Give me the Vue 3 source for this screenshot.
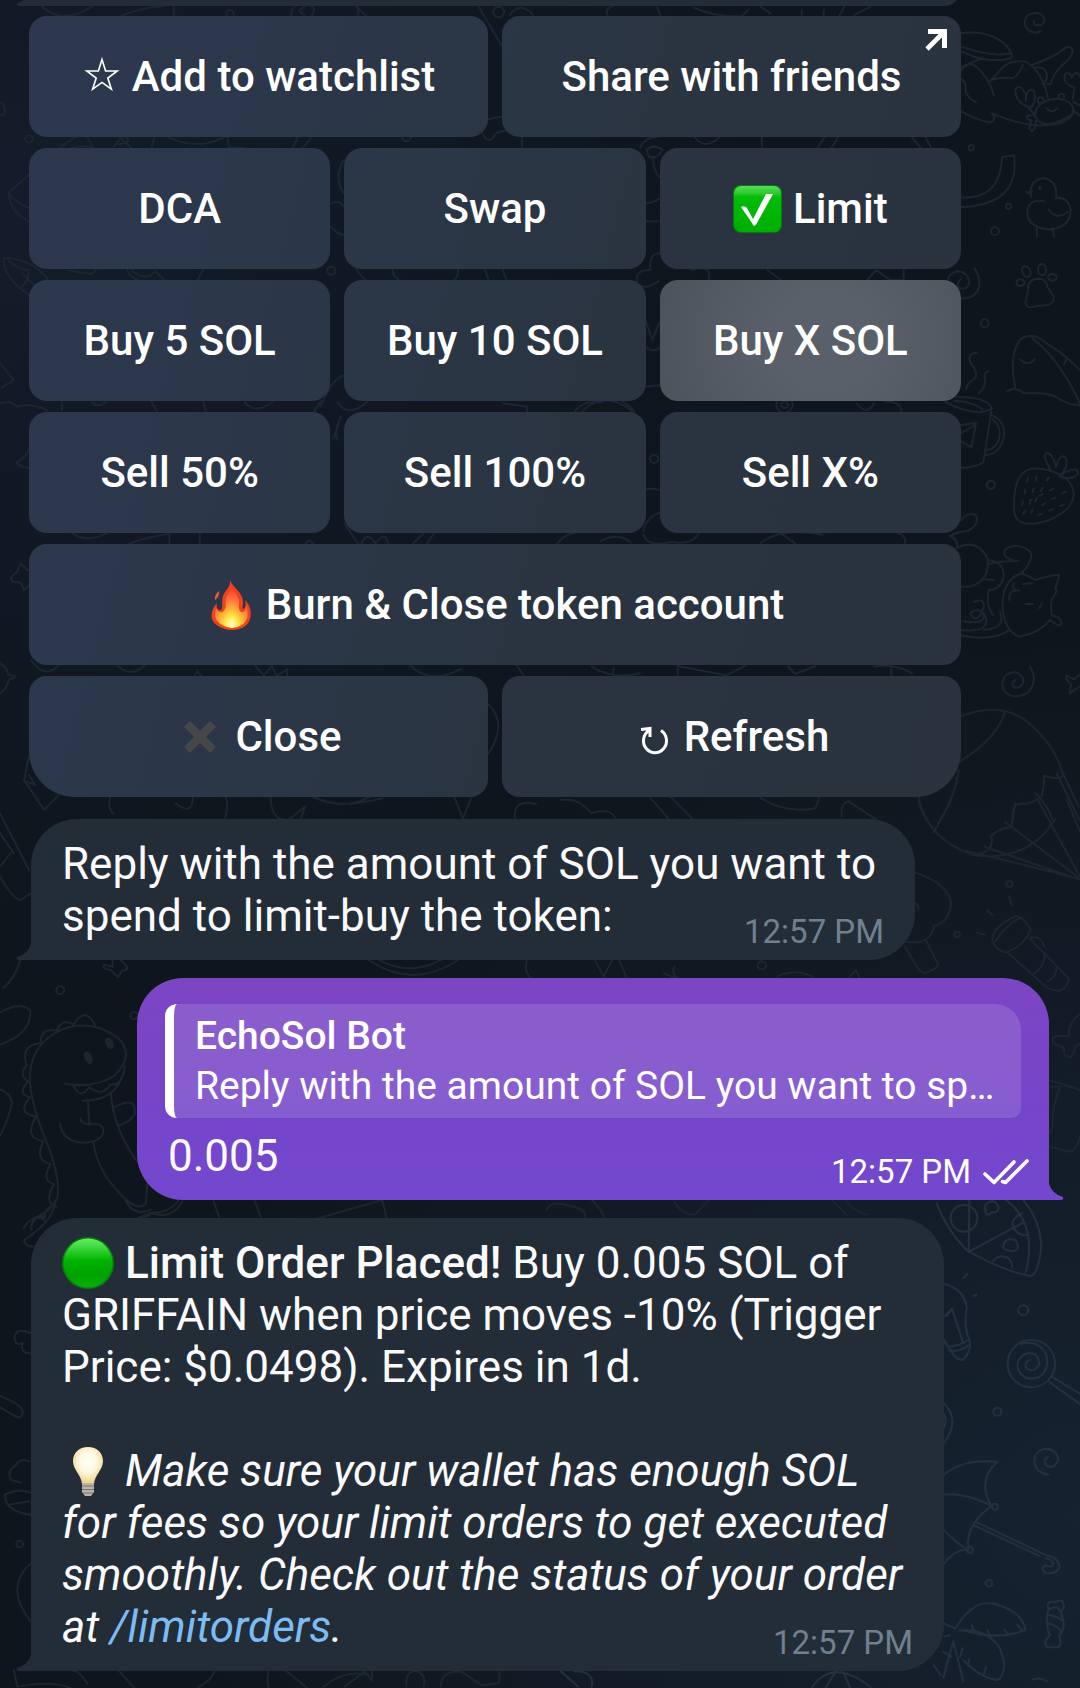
<script setup>
const rows = [
  { cols: 2, keys: [{ id: 'watch', label: 'Add to watchlist', icon: 'star' }, { id: 'share', label: 'Share with friends', external: true }] },
  { cols: 3, keys: [{ id: 'dca', label: 'DCA' }, { id: 'swap', label: 'Swap' }, { id: 'limit', label: 'Limit', icon: 'check' }] },
  { cols: 3, keys: [{ id: 'b5', label: 'Buy 5 SOL' }, { id: 'b10', label: 'Buy 10 SOL' }, { id: 'bx', label: 'Buy X SOL', pressed: true }] },
  { cols: 3, keys: [{ id: 's50', label: 'Sell 50%' }, { id: 's100', label: 'Sell 100%' }, { id: 'sx', label: 'Sell X%' }] },
  { cols: 1, keys: [{ id: 'burn', label: 'Burn & Close token account', icon: 'fire' }] },
  { cols: 2, keys: [{ id: 'close', label: 'Close', icon: 'cross' }, { id: 'refresh', label: 'Refresh', icon: 'refresh' }] },
]
</script>

<template>
  <div class="chat">
    <svg class="wallpaper" viewBox="0 0 1080 1688" preserveAspectRatio="xMidYMin slice" aria-hidden="true">
      <!-- top right: spiral, pot, crab, rainbow, duck, paw -->
      <g transform="translate(940 0) scale(.3333)">
        <path d="M281 62q0 16 14 14q18-2 18-17q-2-20-27-21q-30 2-32 30q3 28 33 30q10 0 15-4" />
        <path d="M60 100q90-12 140 38q20 24 14 36q-70 20-150-20M214 160q-60 12-150-20M62 202l64-28M64 210q20-24 40-14q40 30 58 90M62 236q20 14 14 36q8 24 32 34M150 244l40-44q30-22 70-14q50 34 64 108M152 240q30-8 64-6q14 0 34-40M275 195q60-20 94-46q20-18 28 0q4 20-30 46q-30 30-34 56l-12 2M283 203q34-6 38 24q-2 22-14 26M64 334q40 24 88 34q20-12 4-28q70 30 130 36q60 4 114-36" />
        <path d="M285 350q0-44 56-54q54 0 60 34q-8 36-60 44q-44 2-56-24zM320 324q14 20 32 0M260 320q-36-20-34-52q14-20 32 16v20q0-40 22-34q12 24-4 50zM262 320l20 20M280 344l-20 4q0 14 14 12l-6 24q8 16 16 0l4-20M398 296l6-34q-34-8-30-34q8-20 22 4q12-24 24-4M400 306l20 10M398 330l22 18" />
        <circle cx="302" cy="301" r="9" /><circle cx="364" cy="290" r="9" />
        <path d="M60 592q120 10 126-120l36-6q20 150-162 156" />
        <circle cx="94" cy="443" r="8" /><circle cx="206" cy="619" r="8" /><circle cx="165" cy="694" r="12" />
        <path d="M274 592q-10-50 36-58q44 8 38 60q40-4 44 40q-6 54-70 54q-62-8-60-54q6-40 50-30M276 572l-18 4l16 6M325 628q24 34 58 8M290 684l2 26M337 684l5 26" />
        <circle cx="300" cy="563" r="3" />
        <path d="M62 838q-16 14-4 26q26 8 30-18q-4-30-36-32q-28 4-32 40M103 804q26 40 8 72q-20 26-56 18" />
        <ellipse cx="259" cy="815" rx="12" ry="17" transform="rotate(-25 259 815)" /><ellipse cx="306" cy="809" rx="12" ry="17" /><ellipse cx="337" cy="832" rx="13" ry="10" /><ellipse cx="241" cy="848" rx="12" ry="10" />
        <path d="M258 900q-6 20 14 22q24-6 48-6q22-4 22-24q-12-20-20-32q-2-24-30-24q-28 2-28 30q0 14-6 34z" />
      </g>
      <!-- ghost shell, mug, strawberry, cat -->
      <g transform="translate(940 300) scale(.3333)">
        <circle cx="134" cy="70" r="12" /><circle cx="153" cy="555" r="12" />
        <path d="M226 264q-20-100 14-144q34-30 80 10q66 40 108 90M276 114q80 60 144 196M202 274q24-16 50 6q60-4 92 8q40 30 84 28M241 178q20 24 42 0M381 176l-10 18" />
        <path d="M111 158q-30 0-20 30q26 30 14 48q-26 14-26 32M146 214q-18 4-10 24q0 26-20 42M44 290q100 0 112 36q-50 28-140-20M44 302q60 4 84 26M154 334l-24 154q-40 20-80 14M152 344q50 20 38 76q-20 50-56 44M158 358q28 24 20 58q-14 36-40 34M60 376l48-8l-14 74l-34-20M60 402l48-30" />
        <path d="M222 630q-4-110 52-124q70-2 114 40q30 44-10 84q-60 48-126 40q-28-8-30-40zM334 514q-30-50-14-56q20 4 28 44q10-40 26-32q16 20-10 54q50-30 50-2q-16 20-56 8" />
        <path stroke-dasharray="4 8" d="M264 534l-18 84M290 530l-22 84l-22 34M326 532l-40 70l-16 50M340 566l-70 36M378 574l-80 46M372 614l-94 38" />
        <path d="M62 662q20-26 44-18q16 26-20 48q-40 4-56 16q26 12 20 36q60-30 92 30q10 70-54 86l-30 0M146 780q50 8 44 54q-8 34-44 36q-10 46 14 76M146 792q40-10 90-10M162 840l-26-2M244 820q40-40 26-66q-40-28-74-6q-14 22 26 34M244 820q-60 20-56 106q8 70 50 84q60-10 92-50q40 30 32 2q-4-12-26-16q-6-28 0-50q20-24 10-32q10-28 12-40q-40 4-72 16q-24-14-42-20zM250 852l26-2M256 912l22 0M306 910l-8 14M222 850q-10 20 16 22q-34-4-30 28M100 906q40-14 30 20q-20 50-40 14q30-20 40 4q10 30-60 20M62 990q100 10 70-50M180 936q20 50-50 54M62 1006q90 20 144-14" />
      </g>
      <g transform="translate(540 400) scale(.3444 .3333)">
        <path d="M1382 838q-20 20 0 26q26-4 20-30q-20-30-50-8q-20 30 2 54q30 20 64-4q30-36 4-76M1570 822l-20 16l-22-12q-4 12 14 26l-4 28l28-20" />
        <path d="M1220 950q120-50 200 20q80 70 100 160M1350 934q-20 80-130 150M1216 1110q-10 80-54 150M1100 1190q0 40 30 80M1520 1130q-30 10-56-4q0 30-6 60q-30 30-70 26q-20 10-14 50M1500 1120l66 140M1438 1180q40 40 50 80M1514 1110l50 110" />
        <circle cx="331" cy="177" r="12" /><circle cx="1309" cy="254" r="12" />
        <path d="M306 268q26-4 40 2M300 392q10-40 46-54M300 404q14 40 80 22q60 10 80-24M50 432q20-30 50-32M176 424q50-30 88 4M640 430q60-50 180-26M700 400l40 30M1040 400q26 10 20 30M150 800q60 40 140 20M210 824l4-20M400 796v30M400 798l140 28l56-28M720 798l20 24l60-24M970 800q60-10 110 20M1020 800v30" />
        <path d="M320 1194l60 70M380 1192l66 68M640 1194q80 50 160 30l12-34M876 1250q-4-40 20-46l80 54M60 1200q50-10 90 40q60-20 70 20" />
      </g>
      <!-- gaps between the keyboard rows, left half -->
      <g transform="scale(.3444 .3333)">
        <path d="M120 18q60 60 150 0M350 48q60-26 130-30M505 20v26M845 46q0-34 40-36q40 10 20 36M885 20q-30 14 0 24M1034 20l30 28M1040 18v26M1390 20l66 116M1480 46q20-30 44-20q20 10 24 20" />
        <circle cx="668" cy="42" r="11" /><circle cx="1448" cy="36" r="16" /><circle cx="84" cy="417" r="11" /><circle cx="962" cy="812" r="12" />
        <path d="M170 446l50-36M210 444q20-10 60-2l-16-30M330 440l20-26l30 28M370 412q10 20-30 20M440 444l8-32M490 412q80 40 160 0M660 412l4 30l50 2M850 444l14-32M880 444l26-34M1166 412q14 24 28 0M1418 358q50-14 50 0M1400 400q20 40 40 0q30-20 76 10v34M0 306q20 10 12 40l-12 0" />
        <path d="M84 524l-60 54q6 60 60 86M24 578q20 30 60 46M10 774q80 0 130 66M10 774q0 60 76 112M24 780q26 30 60 30q0 30-20 50M64 820l40 40M370 808q0 20 30 32M380 808q40 40 70 6q20 20 26 24M590 808l-16 32M200 812l66 10l14-14M998 480q-30 50 0 100M960 610q30-10 38 10M960 680q16 20 38 26M1034 808q20 30 30 32M1140 808q0 20 16 30M1330 808q0 24-10 30M1408 808l10 30M1460 808l10 30" />
        <path d="M0 1090l40 50l-34 22M0 1210q30-10 50 10q40-14 90 14M180 1204v26M268 1206q14 20 40 0M440 1206l16 28M590 1206l8 28M710 1206q30 40 80 0M930 1220l30-60q20-30 40-34M980 1206q30 50 86 0M1460 1210l70 10v20" />
      </g>
      <g transform="translate(0 400) scale(.3444 .3333)">
        <path d="M84 148q-10 26-36 40q10 14 36 16M932 4q-20 30-26 40M990 50q-20 40-10 70M968 116l16-46M60 490l20 20h20M60 490l-10 26q-30 20-10 30l20 2l10 22l20-20M210 400q40 30 100 0M372 432q50-20 120-30v30M580 400v30M886 432q14-20 24 0M1000 370l40 62M1050 430q14-40 40 0q30-40 36 0M1200 430l30-30M1240 430l20-30M0 790q20 10 24 34l22 6l-20 10q-8 30-26 40M90 780q40 60 80 16M340 796q40 40 80 0M565 828l8-14l12 14M740 796l26 30l24-28l14 30l30-20v20M1190 796q60 60 150 10M1500 796l20 30M1417 912q60 60 0 150" />
        <path d="M84 1070l-14 70l58 90l42-44M84 1126l20 30l-34-14M320 1192q-10 30 10 50M510 1210q50 40 50-18M656 1192q10 30-4 66M786 1192q0 70 50 68l50-40l-14 40M910 1192q90 40 160 0M1020 1212l90-16M1320 1192l24 64l24-60M1496 1256q-10-60 60-44" />
      </g>
      <g transform="translate(540 0) scale(.3444 .3333)">
        <path d="M196 46q-10-20 20-30M340 22l10 26M446 22q60 30 140 26l20-20M640 20l30 20M760 30v16M824 30v16M870 46l14-26M910 46l50-26M290 444q10-30 50-34M310 450q20-20 46 0q-20 30-40 20zM328 470q0 40 18 60M450 412q30 40 70 0M644 412v30M806 444l20-32M846 444l20-32M1080 412l26 32M1120 412l16 32M306 610q20 0 40-14M306 664h40M346 760q-30 0-26 50q-50 0-36 44q20 16 60-10M440 810q60-20 50 30M660 810l40 30M950 840l26-30l40 30h40v-30" />
        <path d="M306 960l20 60l20-50M306 1040q20 20 40 4M306 1160l40-4M100 1236q20-34 80-30M240 1204q30 20 34 34M920 1210q30 40 50 0M1000 1204q50 0 50 34M120 1236q70-70 150 0" />
        <circle cx="710" cy="1214" r="24" /><circle cx="710" cy="1214" r="10" />
      </g>
      <!-- dinosaur -->
      <g transform="translate(0 960) scale(.3333)">
        <path d="M195 371q90 16 150-26q60-60 10-110q-80-60-170-26q-90 40-96 140q0 80 60 220q34 100 22 150q-20 36-70 56q-20 10-30 30M220 196q34-60 66 0M170 212q16-40 50-18M122 250q0-50 48-38M80 316q-20-60 42-66M84 364q-30-20-4-48M90 412q-40-10-6-48M108 470q-60-10-18-58M130 544q-60-10-22-74M152 612q-50-10-22-68M162 672q-40-10-10-60M170 740q-40-10-8-68M134 772q4-40 36-32M94 810q0-50 40-38" />
        <path d="M220 376q20 44 48 6q40 30 62-8q40 6 44-56M248 422q100 0 120-80M264 424l4 70M180 492q10 56 74 56q60-6 56-40q-4-20-44-16q-24 0-24-16M332 398q10 120 90 220M342 442q70-36 62 20q-14 26-48 34M280 546q10 80 70 144q60 70 88 40l4-60M0 158q60-36 90-8q8 70-90 104M0 388q30 10 36 40q-10 50-36 100M10 84q40-34 52-90M312 14l26 6v-20M312 14q-6 14 20 16l22 22l12-20q20 0 14-14l-18-18M420 776q20-4 30-12" />
        <ellipse class="solid" cx="265" cy="293" rx="9" ry="17" transform="rotate(-25 265 293)" /><ellipse class="solid" cx="328" cy="250" rx="9" ry="15" transform="rotate(-30 328 250)" />
        <circle cx="181" cy="91" r="12" /><circle cx="402" cy="167" r="11" />
      </g>
      <g transform="translate(0 800) scale(.3444 .3333)">
        <path d="M0 40l84 170M0 100l40 60M0 230q40 70 60 70l30-20M0 200l30-40M1070 480q130 90 260 0M1100 480q90 50 180 0M1530 480q-10 30 10 54M620 1204l20 56M740 1204l20 56M920 1256l190-56l14 60M440 1240q60 20 90-36" />
      </g>
      <!-- parachute tail, tree, flashlight, frog -->
      <g transform="translate(540 800) scale(.3444 .3333)">
        <path d="M1100 0q30 120 160 166q160 20 236-110M1144 96l50-96M1380 10q-10 50-10 70q-50 10-60 30q10 40-30 50M1290 140l280 100M1236 152l330 84M1350 66l218 170M1446 0l122 230M1530 0l40 100M1090 218q90 30 104 90q-6 60-50 70q-10 60-84 46M1060 440l40 70q14 16 40 0q20-10 14-20l-34-70M1090 310q10 4 8 18" />
        <path d="M1313 420q0-40 70-72q20 0 42 42q-20 50-74 68q-30-10-38-38zM1322 424q40-60 74-70M1360 460l116 106q50 20 60-30l-114-120M1424 414q30-10 40 26M1466 460q0 40-30 60M1500 500q0 30-26 44M1362 288l8 30M1298 330l16 16M1268 398l22 6" />
        <circle cx="1363" cy="252" r="9" /><circle cx="1211" cy="403" r="8" /><circle cx="644" cy="496" r="12" />
        <path d="M1570 640q-40 30-34 70q-60-10-44 20l30 14q-4 30 20 26q14-20 10-30l18-10M1480 840l88 30M1480 860h30q-20 60-20 80q0 50-10 60M1480 1040l60 16q20-10 30-50M160 480l24 50l26-50M230 480l20 50M360 520l30 14M390 500q-10 20 10 34M690 530q50-26 100 0M900 530l18-20l8 20" />
        <path d="M20 1230q10-30 60-14q60 10 50 40M150 1200q30 30 40 56M390 1204q20 40 60 40l40-44M850 1204l40 40M890 1204q20 30 60 40" />
      </g>
      <!-- pizza, bulb, lollipop, umbrella, candy, palm -->
      <g class="bright" transform="translate(930 1160) scale(.3333)">
        <path d="M20 130q30 80 90 140q100 60 190 78q26-4 34-90q-4-80-56-140M286 342q40-150-60-224M118 120l-2 156l160-86M188 304q20-24 46-10q14 10 12 28M276 160q-40 20-24 46q14 20 36 20M166 134q30-24 40 10q-4 16-20 12q-20 20-20-8zM220 260q4-30 36-20q20 30-10 34q-30-4-26-14" />
        <circle cx="102" cy="175" r="40" /><circle cx="280" cy="451" r="15" /><circle cx="202" cy="755" r="12" /><circle cx="177" cy="1270" r="10" />
        <path d="M42 372q60 14 68 70q-10 60 8 98q10 30-20 60q-20 0-30-20l-26-36M42 470l24-24l34 104M66 448l-16 20M44 540l10 20q30 0 60-20M60 572q30 4 56-16M100 354l12-12M130 408l10-4" />
        <circle cx="304" cy="611" r="71" /><path d="M302 598q-22 10-12 28q24 14 38-14q-4-40-42-30q-32 16-20 50q20 34 60 20q36-24 22-70q-24-44-74-30M366 650l84 52M358 666l92 66M42 730q50 50 0 120M42 762q10 20 0 40M355 890q-20 12-6 26q24 14 36-16q-4-32-38-34q-34 6-34 40q6 34 42 38" />
        <path d="M42 944q60-50 160-38q-60 50-20 130q-80-40-140-32M182 1040q-80 60-66 130q-40-20-74-60M116 1170q-40-4-74 40M138 1086l212 100q40 10 38 36q-10 24-44 16q-14-16 4-22q20 10 22-6q-6-12-20-14M132 1096l196 92" /><circle cx="195" cy="1040" r="9" /><circle cx="120" cy="1170" r="9" />
        <path d="M356 1346q-10-24 20-20q24-14 26 14l-10 18q20 40-4 70q10 36-10 34h-24q-20-10 6-36q-18-40-4-80M362 1346q20-12 30 10M358 1366q30 4 42 20M350 1390q30 4 42 24" />
        <path d="M76 1406q60-100 130-70q70 20 80 74q-80 34-190 0M88 1412q80-10 120 50q30 70-4 98q-50-4-104-60M76 1406l-34-16M60 1426l-18 4M70 1444l-30 110M70 1444l30 120M126 1396l6 16M172 1410l8 20M222 1408l14 16M262 1394l12 16M40 1476l24 14M98 1464l-8 26M116 1498v20M168 1520l-6 22M12 1516l20 30M306 1560q20-10 46 4" />
      </g>
      <g transform="translate(0 1200) scale(.3444 .3333)">
        <path d="M160 0q0 60-90 120q0 20 30 20M90 80q10-40 40-20M364 0q20 50 74 30M520 0q-30 40-80 38l-40 16M90 400q-40-20-48 10q0 30 24 20q-10 30 24 30M0 588q60 24 66 46q0 30-30 10l-36-22M84 784q-30-10-36 10q-30 20-16 46l30 8M14 884q40-20 76-6M14 884q0 50 76 60M26 914l60-10M90 1090q-80 70 0 176M40 1410l10 50q100-20 160 6M210 1412q20 0 44 40M346 1414l46 52M624 1412q-10 30-50 50M780 1414q-6 20 0 50M830 1412l60 50M940 1460q60-50 120-36M1000 1460l60-46l20 30v-30M1180 1460q-4-50 30-46q30 10 20 46M1280 1460q0-50 60-44l60 40l50-6v-34" /><circle cx="57" cy="1032" r="10" />
      </g>
      <g class="bright" transform="translate(540 1200) scale(.3444 .3333)">
        <path d="M60 1414l50 46M100 1414q60 0 50 46M790 1462q60-90 170 0M830 1462l30-50M900 1462l-20-46" />
      </g>
    </svg>

    <main class="thread">
      <div class="bubble in previous"></div>

      <div class="keyboard">
        <div v-for="(row, i) in rows" :key="i" class="row" :class="'cols-' + row.cols">
          <button v-for="key in row.keys" :key="key.id" type="button" class="key" :class="{ pressed: key.pressed }">
            <svg v-if="key.icon === 'star'" class="star" viewBox="0 0 40 50" aria-hidden="true">
              <path d="M20 7.5l3.6 11.5h11.6l-9.4 7 3.6 11.2-9.4-6.8-9.4 6.8 3.6-11.2-9.4-7h11.6z" fill="none" stroke="#fff" stroke-width="1.6" />
            </svg>
            <svg v-else-if="key.icon === 'check'" class="emoji" viewBox="0 0 50 50" aria-hidden="true">
              <defs><linearGradient id="chk" x1="0" y1="0" x2="0" y2="1"><stop offset="0" stop-color="#56dc56" /><stop offset=".16" stop-color="#2ccb2c" /><stop offset=".24" stop-color="#00bd08" /><stop offset="1" stop-color="#00ae00" /></linearGradient></defs>
              <rect x="0" y="1" width="49" height="48" rx="8" fill="#067a10" />
              <rect x="1" y="2" width="47" height="46" rx="7" fill="url(#chk)" />
              <path d="M8 23q4-2 6 1l6 11L33 10h7L24 39q-3 6-5 0z" fill="#fff" />
            </svg>
            <svg v-else-if="key.icon === 'fire'" class="emoji" viewBox="0 0 50 50" aria-hidden="true">
              <defs><radialGradient id="fire" cx=".5" cy=".92" r=".85"><stop offset="0" stop-color="#fffde0" /><stop offset=".2" stop-color="#ffed50" /><stop offset=".45" stop-color="#ffae35" /><stop offset=".7" stop-color="#ff7040" /><stop offset="1" stop-color="#f04020" /></radialGradient></defs>
              <path d="M24 0c2 7 13 12 13 22 0 4-1 6 0 7 3 0 3-6 2-9 5 5 7 12 5 19-2 7-9 11-18 11S8 45 6 39c-1-5 0-11 5-16-1 4 0 7 3 7 4 0 1-7 3-14C19 10 25 7 24 0z" fill="#f4401c" />
              <path d="M25 5c2 7 9 11 8 19-1 5 1 9 4 8 3-1 3-4 3-7 3 9 2 16-4 20q-10 6-20 0c-7-4-8-10-6-17 2 5 7 6 9 1 2-4-1-10 3-15 2-3 4-6 3-9z" fill="url(#fire)" />
              <path d="M13 11q1 5-4 9-1-5 4-9z" fill="#ff5630" />
            </svg>
            <svg v-else-if="key.icon === 'cross'" class="emoji" viewBox="0 0 50 50" aria-hidden="true">
              <path d="M9 15l6-6 10 10L35 9l6 6-10 10 10 10-6 6-10-10-10 10-6-6 10-10z" fill="#454749" />
            </svg>
            <svg v-else-if="key.icon === 'refresh'" class="star" viewBox="0 0 40 50" aria-hidden="true">
              <path d="M7 17.500l9-1v8.500M15 18.500A11.500 12 0 1 0 27 18.500" fill="none" stroke="#fff" stroke-width="3" />
            </svg>
            <span>{{ key.label }}</span>
            <svg v-if="key.external" class="external" viewBox="0 0 24 24" aria-hidden="true">
              <path d="M3 21L19 5" stroke="#fff" stroke-width="4.600" /><path d="M4 1h19v19h-5V6H4z" fill="#fff" />
            </svg>
          </button>
        </div>
      </div>

      <article class="bubble in prompt">
        <p>Reply with the amount of SOL you want to spend to limit-buy the token:</p>
        <time class="time">12:57 PM</time>
      </article>

      <article class="bubble out">
        <blockquote class="quote">
          <strong>EchoSol Bot</strong>
          <span>Reply with the amount of SOL you want to sp…</span>
        </blockquote>
        <div class="answer">
          <p>0.005</p>
          <span class="time">
            <time>12:57 PM</time>
            <svg class="ticks" viewBox="0 0 46 26" role="img" aria-label="Read">
              <path d="M2 15l9 8.500L31 3M19.500 22.500l3 1L44 2" fill="none" stroke="#fff" stroke-width="3.600" stroke-linecap="round" stroke-linejoin="round" />
            </svg>
          </span>
        </div>
      </article>

      <article class="bubble in order">
        <div class="body">
          <p>
            <svg class="inline" viewBox="0 0 52 52" role="img" aria-label="Green circle">
              <defs><linearGradient id="dot" x1="0" y1="0" x2="0" y2="1"><stop offset="0" stop-color="#62ee62" /><stop offset=".18" stop-color="#3fd83f" /><stop offset=".45" stop-color="#00b400" /><stop offset=".75" stop-color="#00a000" /><stop offset="1" stop-color="#08b008" /></linearGradient></defs>
              <circle cx="26" cy="26" r="26" fill="#087c0c" /><circle cx="26" cy="26" r="24.500" fill="url(#dot)" />
            </svg>
            <strong>Limit Order Placed!</strong> Buy 0.005 SOL of GRIFFAIN when price moves -10% (Trigger Price: $0.0498). Expires in 1d.
          </p>
          <p>
            <svg class="inline" viewBox="0 0 52 52" role="img" aria-label="Light bulb">
              <defs><radialGradient id="bulb" cx=".5" cy=".4" r=".6"><stop offset="0" stop-color="#fffffc" /><stop offset=".5" stop-color="#fff8df" /><stop offset="1" stop-color="#edcf82" /></radialGradient></defs>
              <path d="M26 2c9 0 15 6 15 14 0 9-8 13-9 23H20c-1-10-9-14-9-23C11 8 17 2 26 2z" fill="url(#bulb)" />
              <path d="M20 38h12v9l-3 4h-6l-3-4z" fill="#b9b3aa" /><path d="M20 41h12M20 44.500h12M21 48h10" stroke="#77736e" stroke-width="1" />
            </svg>
            <em>Make sure your wallet has enough SOL for fees so your limit orders to get executed smoothly. Check out the status of your order at <a href="#limitorders">/limitorders</a>.</em>
          </p>
        </div>
        <time class="time">12:57 PM</time>
      </article>
    </main>
  </div>
</template>

<style>
body {
  margin: 0;
  background: #0e151c;
}
</style>

<style scoped>
.chat {
  position: relative;
  min-height: 100vh;
  overflow: hidden;
  color: #fafafc;
  font: 400 44px/52px Roboto, "Noto Sans", sans-serif;
  background:
    radial-gradient(circle at 100% 90%, #162230, transparent 50%),
    radial-gradient(circle at 0 12%, #141b2a, transparent 42%),
    #0e151c;
}
.wallpaper {
  position: absolute;
  inset: 0;
  width: 100%;
  height: 100%;
  fill: none;
  stroke: #1b2630;
  stroke-width: 2;
  stroke-linecap: round;
  stroke-linejoin: round;
}
.wallpaper * {
  vector-effect: non-scaling-stroke;
}
.wallpaper .bright {
  stroke: #22313e;
}
.wallpaper .solid {
  fill: #1b2630;
}
.thread {
  position: relative;
  display: flex;
  flex-direction: column;
  align-items: flex-start;
  gap: 18px;
  padding: 0 31px 17px;
}
p,
blockquote {
  margin: 0;
}
strong {
  font-weight: 500;
}

.bubble {
  position: relative;
  display: grid;
  box-sizing: border-box;
  width: 100%;
  padding: 19px 31px 18px;
}
.bubble::after {
  content: "";
  position: absolute;
  bottom: 0;
  width: 16px;
  height: 24px;
  background: inherit;
}
.in {
  background: #222d38;
  border-radius: 46px 46px 46px 0;
}
.in::after {
  right: calc(100% - 1px);
  clip-path: path("M16 0C16 11 11 18 1 21Q0 23 2 24H16Z");
}
.out {
  align-self: flex-end;
  max-width: 912px;
  padding: 26px 28px 18px;
  background: linear-gradient(#7c45c4, #7545c9 60%, #7348ce);
  border-radius: 46px 46px 0 46px;
}
.out::after {
  left: calc(100% - 1px);
  background: #7348ce;
  clip-path: path("M0 0C0 11 5 18 15 21Q16 23 14 24H0Z");
}
.previous {
  width: calc(100% - 88px);
  height: 60px;
  margin-top: -54px;
  margin-bottom: -8px;
  border-radius: 46px 46px 18px 0;
}
.prompt {
  max-width: 884px;
}
.order {
  max-width: 913px;
}
.prompt > *,
.order > * {
  grid-area: 1 / 1;
}

.time {
  display: flex;
  align-items: center;
  align-self: end;
  justify-self: end;
  gap: 12px;
  margin-bottom: -10px;
  font-size: 33px;
  line-height: 40px;
  color: #70808f;
}
.body {
  display: grid;
  gap: 52px;
}
.inline {
  width: 52px;
  height: 52px;
  margin-right: 11px;
  vertical-align: -11px;
}
a {
  color: #7cbcf2;
  text-decoration: none;
}

.quote {
  display: grid;
  padding: 7px 16px 7px 21px;
  border-left: 9px solid #fff;
  border-radius: 12px 26px 10px 12px;
  background: rgb(255 255 255 / 13%);
  background-clip: padding-box;
  color: #fff;
  font-size: 39px;
  line-height: 50px;
}
.quote span {
  overflow: hidden;
  white-space: nowrap;
  text-overflow: ellipsis;
}
.answer {
  display: flex;
  justify-content: space-between;
  margin: 12px -8px 0 3px;
}
.answer .time {
  color: #fff;
}
.ticks {
  width: 46px;
  height: 26px;
}

.keyboard {
  display: grid;
  gap: 11px;
  width: calc(100% - 86px);
  margin: 0 0 4px -2px;
}
.row {
  display: grid;
  gap: 14px;
}
.cols-2 {
  grid-template-columns: 1fr 1fr;
}
.cols-3 {
  grid-template-columns: 1fr 1fr 1fr;
}
.key {
  position: relative;
  display: flex;
  align-items: center;
  justify-content: center;
  gap: 10px;
  min-height: 121px;
  padding: 0;
  border: 0;
  border-radius: 18px;
  color: #fff;
  font: 500 42px/50px Roboto, "Noto Sans", sans-serif;
  background: linear-gradient(105deg, #2d3850, #2b3748 25%, #2a3440 50%, #29323c) fixed;
}
.pressed {
  background: radial-gradient(circle at 55% 50%, #5a6069 30%, #4b535d 100%);
}
.row:last-child .key:first-child {
  border-bottom-left-radius: 46px;
}
.row:last-child .key:last-child {
  border-bottom-right-radius: 46px;
}
.emoji {
  width: 50px;
  height: 50px;
}
.star {
  width: 40px;
  height: 50px;
}
.external {
  position: absolute;
  top: 12px;
  right: 13px;
  width: 24px;
  height: 24px;
}
</style>
